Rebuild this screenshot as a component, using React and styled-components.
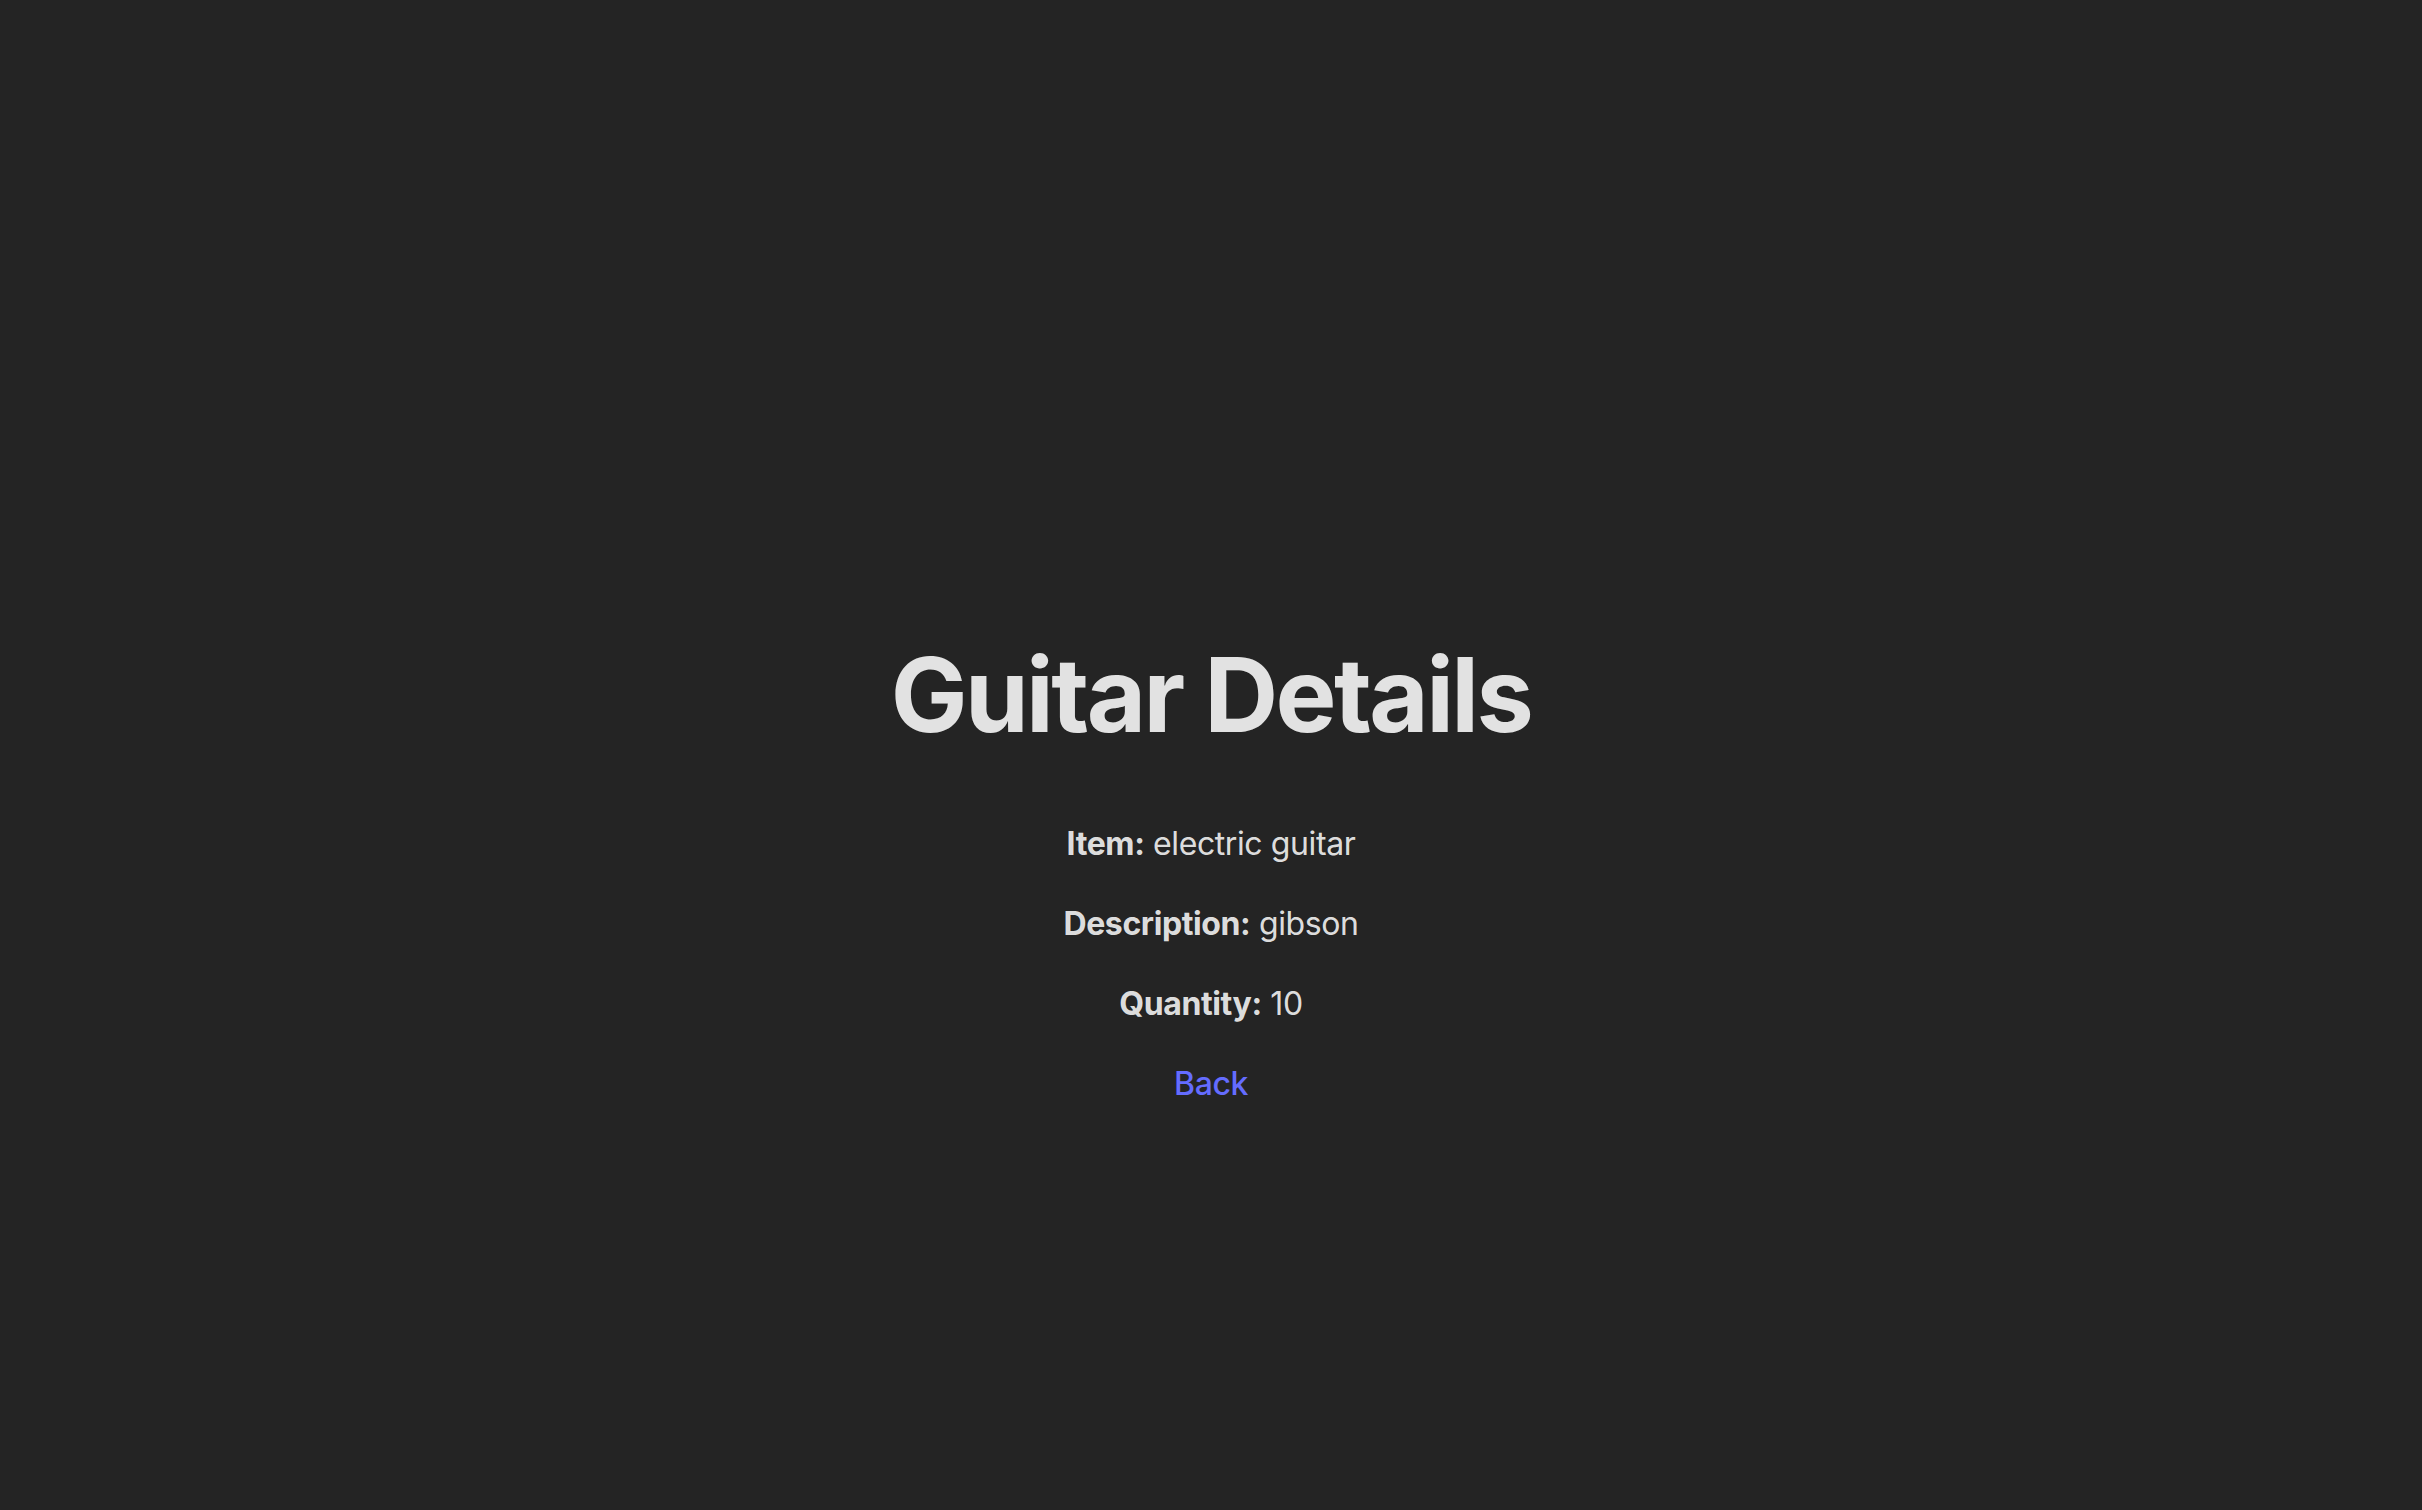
import React from 'react'
import styled, { createGlobalStyle } from 'styled-components'

const GlobalStyle = createGlobalStyle`
  html, body {
    margin: 0;
    padding: 0;
    background-color: #242424;
  }
  body {
    font-family: Inter, "Noto Sans", system-ui, sans-serif;
    font-size: 32px;
    line-height: 1.5;
    font-weight: 400;
    letter-spacing: -0.4px;
    color: rgba(255, 255, 255, 0.87);
    -webkit-font-smoothing: antialiased;
  }
`

const Page = styled.div`
  min-height: 100vh;
  box-sizing: border-box;
  padding-top: 639px;
  display: flex;
  flex-direction: column;
  align-items: center;
  text-align: center;
`

const Title = styled.h1`
  font-size: 102.4px;
  line-height: 1.1;
  font-weight: 700;
  letter-spacing: -2.6px;
  margin: 0 0 68.6px;
`

const Row = styled.p`
  margin: 0 0 32px;
`

const Label = styled.strong`
  font-weight: 700;
`

const BackLink = styled.a`
  font-weight: 500;
  color: #646cff;
  text-decoration: inherit;
  cursor: pointer;
  &:hover {
    color: #535bf2;
  }
`

const guitar = {
  item: 'electric guitar',
  description: 'gibson',
  quantity: 10
}

export default function App() {
  return (
    <>
      <GlobalStyle />
      <Page>
        <Title>Guitar Details</Title>
        <Row>
          <Label>Item:</Label> {guitar.item}
        </Row>
        <Row>
          <Label>Description:</Label> {guitar.description}
        </Row>
        <Row>
          <Label>Quantity:</Label> {guitar.quantity}
        </Row>
        <div>
          <BackLink href="#">Back</BackLink>
        </div>
      </Page>
    </>
  )
}
